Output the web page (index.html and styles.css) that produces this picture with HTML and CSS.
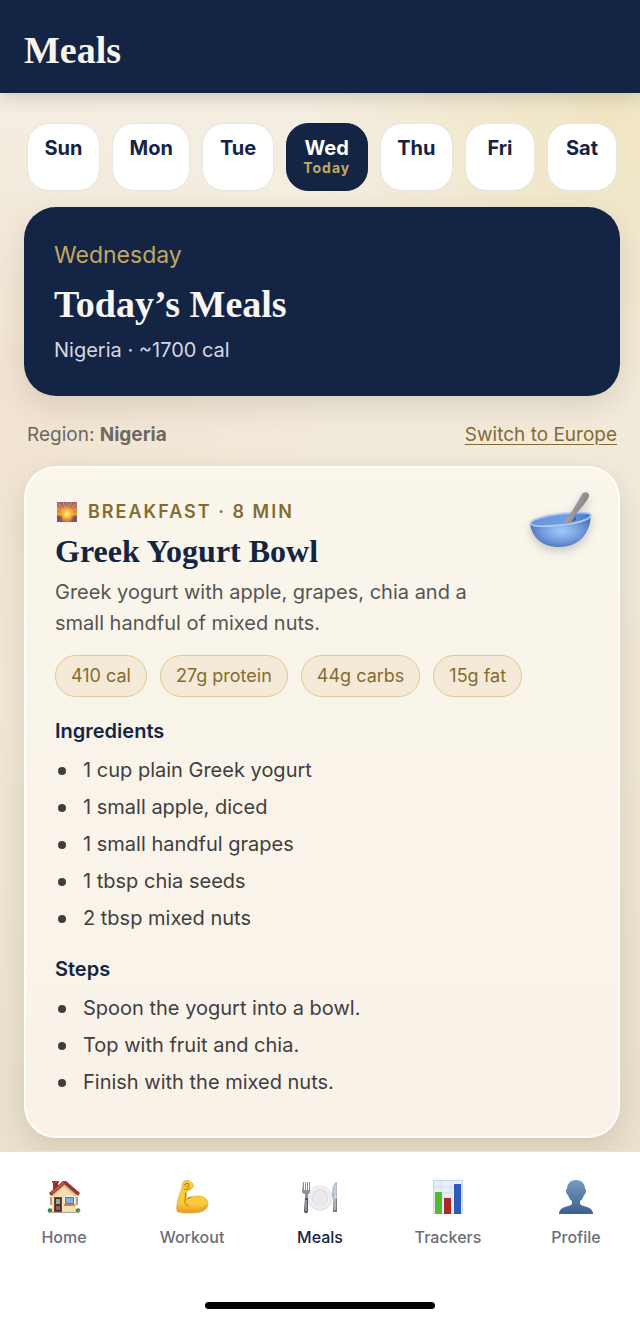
FILE: index.html
```html
<!DOCTYPE html>
<html lang="en">

<head>
    <meta charset="UTF-8">
    <meta name="viewport" content="width=device-width, initial-scale=1.0">
    <title>Meals</title>
    <link rel="stylesheet" href="styles.css">
</head>

<body>

    <header class="topbar">
        <h1>Meals</h1>
    </header>

    <main>
        <!-- Day picker -->
        <div class="days">
            <button type="button" class="day">Sun</button>
            <button type="button" class="day">Mon</button>
            <button type="button" class="day">Tue</button>
            <button type="button" class="day active" aria-pressed="true">Wed<span class="today">Today</span></button>
            <button type="button" class="day">Thu</button>
            <button type="button" class="day">Fri</button>
            <button type="button" class="day">Sat</button>
        </div>

        <section class="hero">
            <p class="hero-day">Wednesday</p>
            <h2>Today’s Meals</h2>
            <p class="hero-info">Nigeria · ~1700 cal</p>
        </section>

        <div class="region">
            <span>Region: <strong>Nigeria</strong></span>
            <a href="#europe">Switch to Europe</a>
        </div>

        <!-- Meal card -->
        <article class="meal">
            <div class="meal-head">
                <div class="meal-text">
                    <p class="meal-type">
                        <svg class="sunrise" viewBox="0 0 20 20" aria-hidden="true">
                            <defs>
                                <linearGradient id="sky" x1="0" y1="0" x2="0" y2="1">
                                    <stop offset="0" stop-color="#8d6274" />
                                    <stop offset=".35" stop-color="#d47748" />
                                    <stop offset=".65" stop-color="#f7a32c" />
                                </linearGradient>
                                <radialGradient id="glow" cx=".5" cy=".6" r=".4">
                                    <stop offset="0" stop-color="#fff3a0" />
                                    <stop offset=".4" stop-color="#ffc83c" />
                                    <stop offset="1" stop-color="#ffb030" stop-opacity="0" />
                                </radialGradient>
                            </defs>
                            <path fill="url(#sky)" d="M0 0h20v20H0z" />
                            <path stroke="#ffcb6c" stroke-width=".7" opacity=".7" d="M10 12 1 1M10 12 6 0M10 12V0M10 12l4-12M10 12l9-11M10 12 0 6M10 12l10-6" />
                            <path fill="#80506b" d="M0 13.500h20V20H0z" />
                            <path fill="#c8704b" d="M3 14h14l-3 2 2 2-4 2H8l-4-2 2-2z" />
                            <path fill="url(#glow)" d="M0 0h20v20H0z" />
                        </svg>
                        Breakfast · 8 min
                    </p>
                    <h3>Greek Yogurt Bowl</h3>
                    <p class="meal-desc">Greek yogurt with apple, grapes, chia and a small handful of mixed nuts.</p>
                </div>
                <svg class="bowl" viewBox="0 0 64 60" aria-hidden="true">
                    <defs>
                        <radialGradient id="bowlSide" cx=".52" cy=".5" r=".55">
                            <stop offset="0" stop-color="#a3c8f8" />
                            <stop offset=".55" stop-color="#769fdf" />
                            <stop offset="1" stop-color="#4b72b9" />
                        </radialGradient>
                        <linearGradient id="bowlIn" x1="0" y1="0" x2="1" y2="0">
                            <stop offset="0" stop-color="#6d94d5" />
                            <stop offset=".6" stop-color="#6e9ce4" />
                            <stop offset="1" stop-color="#4674c0" />
                        </linearGradient>
                        <linearGradient id="spoon" x1="0" y1="0" x2="1" y2=".6">
                            <stop offset="0" stop-color="#bcb8ba" />
                            <stop offset=".5" stop-color="#a19da0" />
                            <stop offset="1" stop-color="#777579" />
                        </linearGradient>
                    </defs>
                    <path fill="url(#bowlSide)" d="M1 34C3 48 14 57 30 57 48 57 61 46 62 25L34 30z" />
                    <path fill="url(#bowlIn)" stroke="#abc9f6" stroke-width="1.800" d="M1.500 33.500C2 29 20 24.500 40 23.200 54 22.200 62 22.700 62 25.200 61 30 46 34 27 35.500 10 37 2 36 1.500 33.500z" />
                    <path fill="#315fa9" d="M43 32 46 24l1 6z" />
                    <path fill="url(#spoon)" d="M34 34C36 29 43 22 46 16L53 4C55 1 61 2 60 6 59 10 52 18 48 23L42 33z" />
                </svg>
            </div>

            <ul class="chips">
                <li>410 cal</li>
                <li>27g protein</li>
                <li>44g carbs</li>
                <li>15g fat</li>
            </ul>

            <h4>Ingredients</h4>
            <ul class="list">
                <li>1 cup plain Greek yogurt</li>
                <li>1 small apple, diced</li>
                <li>1 small handful grapes</li>
                <li>1 tbsp chia seeds</li>
                <li>2 tbsp mixed nuts</li>
            </ul>

            <h4>Steps</h4>
            <ul class="list">
                <li>Spoon the yogurt into a bowl.</li>
                <li>Top with fruit and chia.</li>
                <li>Finish with the mixed nuts.</li>
            </ul>
        </article>
    </main>

    <!-- Bottom navigation -->
    <footer class="tabbar">
        <nav>
            <a href="#home">
                <svg viewBox="0 0 36 36" aria-hidden="true">
                    <path fill="#8c3430" d="M7 3h5v10H7z" />
                    <path fill="#a9443c" d="M6 2h7v2H6z" />
                    <path fill="#f5dfb1" d="M6 15 18 5l12 10v18H6z" />
                    <path fill="#dfbd8c" d="M6 15 18 5l12 10v3L18 8 6 18z" />
                    <path fill="#963731" d="M3 14 17 2h3l14 12-2 3L18.500 5.500 5 17z" />
                    <path fill="#bc5548" d="m5 13 12-10 2 1L6 15z" />
                    <path fill="#754334" d="M8 18h8v15H8z" />
                    <path fill="#512d27" d="M9 19h6v13H9z" />
                    <path fill="#8da9a8" d="M10 20h4v5h-4z" />
                    <path fill="#94604b" d="M10 27h4v4h-4z" />
                    <path fill="#c09b85" d="M4 18h2v8H4zM30 18h2v8h-2z" />
                    <path fill="#fff3d6" d="M18 17h11v10H18z" />
                    <path fill="#5479a7" d="M19 18h9v7h-9z" />
                    <path fill="#88afd6" d="M20 19h7v5h-7z" />
                    <path fill="#b98561" d="M18 25h11v2H18z" />
                    <path fill="#a9a19b" d="M6 33h24v1H6z" />
                    <circle cx="4" cy="31.500" r="2.300" fill="#4e7e32" />
                    <circle cx="32" cy="31.500" r="2.300" fill="#4e7e32" />
                    <circle cx="33" cy="32" r="1.200" fill="#7ba43d" />
                </svg>
                Home
            </a>
            <a href="#workout">
                <svg viewBox="0 0 36 36" aria-hidden="true">
                    <defs>
                        <linearGradient id="skin" x1="0" y1="0" x2="0" y2="1">
                            <stop offset="0" stop-color="#f8d33d" />
                            <stop offset=".7" stop-color="#f9ca3c" />
                            <stop offset="1" stop-color="#e99d25" />
                        </linearGradient>
                    </defs>
                    <path fill="url(#skin)" stroke="#dc9c25" stroke-width=".6" d="M9 3C11 1 15 1 17 3L19 5C20 8 18 10 15 11L13 12 12 20C15 18 19 17 24 17 30 17 34 20 34 25 34 31 27 34 18 34 11 34 5 34 3 32 2 28 4 18 7 12z" />
                    <path fill="none" stroke="#b97818" stroke-width="1" stroke-linecap="round" d="M10 6c2-2 4-2 5 1-1 2-3 2-4-1M12 4l3 1M10 10c2 1 4 1 6-1M11.500 14 11 22c0 3 1 4 3 5M13 20l4-2" />
                    <path fill="none" stroke="#e6a82c" stroke-width="1.500" d="M4 31c9 2 23 2 29-5" />
                </svg>
                Workout
            </a>
            <a href="#meals" class="current" aria-current="page">
                <svg viewBox="0 0 36 36" aria-hidden="true">
                    <circle cx="18" cy="19" r="12.500" fill="#d9d9dc" />
                    <circle cx="18" cy="18.500" r="12" fill="#efeff1" />
                    <circle cx="18" cy="18.500" r="8" fill="#d6d6d9" />
                    <circle cx="18" cy="19" r="7.500" fill="#e9e9eb" />
                    <path fill="#8a929f" d="M1 3h1v8h1V3h1v8h1V3h1v8h1V3h1v9c0 2-1 3-2 3v5H3v-5c-2 0-3-1-3-3z" />
                    <path fill="#555962" d="M3 19h3v13c0 3-4 3-4 0z" />
                    <path stroke="#c4cbd5" d="M4 21v11" />
                    <path fill="#aeb8c7" d="M35 3v30h-4V19l-1-1c0-8 1-14 5-15z" />
                    <path fill="#737c8a" d="M32 20h3v13h-4z" />
                    <path stroke="#e1e8f0" d="M33 6v25" />
                </svg>
                Meals
            </a>
            <a href="#trackers">
                <svg viewBox="0 0 36 36" aria-hidden="true">
                    <path fill="#cbd8e5" d="M3 1h30v34H3z" />
                    <path fill="#e6eef6" d="M4 2h28v32H4z" />
                    <path stroke="#cedbe9" stroke-width=".7" d="M4 8h28M4 14h28M4 20h28M4 26h28M11 2v32M21 2v32" />
                    <path fill="#53ba34" d="M5 13h7v22H5z" />
                    <path fill="#ad2925" d="M14 19h7v16h-7z" />
                    <path fill="#2c5bbd" d="M24 5h7v30h-7z" />
                </svg>
                Trackers
            </a>
            <a href="#profile">
                <svg viewBox="0 0 36 36" aria-hidden="true">
                    <defs>
                        <linearGradient id="bust" x1="0" y1="0" x2="0" y2="1">
                            <stop offset="0" stop-color="#779bc0" />
                            <stop offset="1" stop-color="#3d5f8d" />
                        </linearGradient>
                    </defs>
                    <path fill="url(#bust)" d="M18 1c6 0 9 4 9 9 2 0 1 5-1 6-1 3-2 5-4 6v3c2 3 12 2 13 9v1H1v-1c1-7 11-6 13-9v-3c-2-1-3-3-4-6-2-1-3-6-1-6 0-5 3-9 9-9z" />
                </svg>
                Profile
            </a>
        </nav>
        <div class="home-indicator"></div>
    </footer>

</body>

</html>
```
FILE: styles.css
```css
* {
    box-sizing: border-box;
}

body {
    margin: 0;
    min-height: 100vh;
    display: flex;
    flex-direction: column;
    font-family: Inter, "Liberation Sans", sans-serif;
    font-size: 20px;
    color: #3f3e3f;
    background:
        radial-gradient(circle at 95% 9%, rgba(234, 216, 150, 0.4), transparent 300px),
        radial-gradient(circle at 0 31%, rgba(240, 208, 184, 0.3), transparent 320px),
        linear-gradient(#f5efe4, #f1e9d8 45%, #e8dec8);
}

h1,
h2,
h3,
h4,
p,
ul {
    margin: 0;
    padding: 0;
}

h1,
h2,
h3 {
    font-family: "Liberation Serif", serif;
    font-weight: bold;
}

.topbar {
    background-color: #142445;
    color: #f8f4ea;
    padding: 29px 24px 22px;
    box-shadow: 0 4px 18px rgba(60, 50, 40, 0.2);
}

h1,
h2 {
    font-size: 38px;
    line-height: 42px;
}

main {
    flex: 1;
    padding: 30px 20px 13px 24px;
}

/* Day picker */
.days {
    display: flex;
    gap: 12px;
    padding: 0 3px;
    margin-bottom: 16px;
}

.day {
    flex: 1 1 auto;
    min-width: 70px;
    height: 68px;
    padding: 12px;
    display: flex;
    flex-direction: column;
    align-items: center;
    border: 1px solid #e5e5e7;
    border-radius: 22px;
    background-color: white;
    color: #142445;
    font-family: inherit;
    font-size: 20px;
    font-weight: 700;
    line-height: 24px;
    cursor: pointer;
}

.day.active {
    background-color: #142445;
    border-color: #142445;
    color: white;
}

.today {
    font-size: 14px;
    line-height: 16px;
    letter-spacing: 1px;
    color: #c1a860;
}

/* Hero */
.hero {
    padding: 32px 30px 30px;
    border-radius: 32px;
    background-color: #142445;
    color: #f8f6f3;
    box-shadow: 0 10px 30px rgba(70, 50, 30, 0.14);
}

.hero-day {
    font-size: 23px;
    line-height: 32px;
    color: #c1a860;
}

.hero h2 {
    margin: 12px 0 9px;
}

.hero-info {
    font-size: 20px;
    line-height: 32px;
    color: #d3d8e3;
}

.region {
    display: flex;
    justify-content: space-between;
    padding: 25px 3px 17px;
    font-size: 19px;
    line-height: 28px;
    color: #6c6864;
}

.region strong {
    font-weight: 700;
}

.region a {
    color: #856b30;
    text-underline-offset: 3px;
}

/* Meal card */
.meal {
    padding: 30px 25px 32px 29px;
    border: 2px solid rgba(255, 255, 255, 0.8);
    border-radius: 32px;
    background: linear-gradient(#faf6eb, #f9f4e9 40%, #faf2e9);
    box-shadow: 0 10px 30px rgba(70, 50, 30, 0.14);
}

.meal-head {
    display: flex;
    justify-content: space-between;
    gap: 20px;
}

.meal-text {
    max-width: 450px;
}

.meal-type {
    display: flex;
    align-items: center;
    gap: 11px;
    font-size: 18px;
    font-weight: 600;
    line-height: 28px;
    letter-spacing: 2px;
    text-transform: uppercase;
    color: #856b30;
}

.sunrise {
    width: 20px;
    height: 20px;
    margin-left: 2px;
}

.meal h3 {
    margin: 5px 0 6px;
    font-size: 32px;
    line-height: 40px;
    color: #142445;
}

.meal-desc {
    line-height: 31px;
    color: #565453;
}

.bowl {
    flex: none;
    width: 64px;
    height: 60px;
    margin-top: -8px;
    filter: drop-shadow(0 4px 5px rgba(60, 60, 80, 0.25));
}

.chips {
    display: flex;
    flex-wrap: wrap;
    gap: 13px;
    margin: 16px 0 20px;
    list-style: none;
}

.chips li {
    padding: 5px 15px;
    border: 1px solid #dfc998;
    border-radius: 21px;
    background-color: #f4ead7;
    font-size: 18px;
    line-height: 30px;
    color: #856b30;
}

.meal h4 {
    font-size: 20px;
    font-weight: 600;
    line-height: 28px;
    color: #142445;
}

.list {
    margin: 10px 0 21px;
    padding-left: 3px;
    list-style: none;
}

.list li {
    display: flex;
    align-items: center;
    gap: 17px;
    margin-bottom: 6px;
    line-height: 31px;
}

.list li::before {
    content: "";
    flex: none;
    width: 8px;
    height: 8px;
    border-radius: 50%;
    background-color: #3f3e3f;
}

.list:last-child {
    margin-bottom: 0;
}

/* Bottom navigation */
.tabbar {
    position: sticky;
    bottom: 0;
    padding: 27px 0 12px;
    border-top: 1px solid #e6e1df;
    background-color: white;
}

.tabbar nav {
    display: flex;
}

.tabbar a {
    flex: 1;
    display: flex;
    flex-direction: column;
    align-items: center;
    gap: 10px;
    font-size: 16px;
    font-weight: 500;
    line-height: 24px;
    color: #6b6e78;
    text-decoration: none;
}

.tabbar a.current {
    color: #142445;
}

.tabbar svg {
    width: 36px;
    height: 36px;
}

.home-indicator {
    width: 36%;
    height: 7px;
    margin: 53px auto 0;
    border-radius: 4px;
    background-color: black;
}
```
